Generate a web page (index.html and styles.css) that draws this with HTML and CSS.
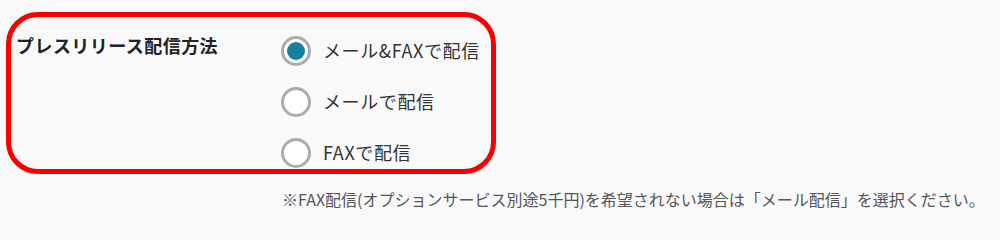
FILE: index.html
```html
<!DOCTYPE html>
<html lang="ja">
<head>
<meta charset="utf-8">
<link rel="stylesheet" href="styles.css">
</head>
<body>
<div class="page">
  <div class="box">
    <div class="label">プレスリリース配信方法</div>
    <div class="options">
      <label class="option"><span class="radio checked"></span><span class="opt-text">メール&amp;FAXで配信</span></label>
      <label class="option"><span class="radio"></span><span class="opt-text">メールで配信</span></label>
      <label class="option"><span class="radio"></span><span class="opt-text">FAXで配信</span></label>
    </div>
  </div>
  <p class="note">※FAX配信(オプションサービス別途5千円)を希望されない場合は「メール配信」を選択ください。</p>
</div>
</body>
</html>
```

FILE: styles.css
```css
html, body {
  margin: 0;
  padding: 0;
  background: #f9f9f9;
}
body {
  font-family: "Noto Sans CJK JP", "Noto Sans", sans-serif;
  color: #333;
}
.page {
  padding: 12px 0 0 6px;
}
.box {
  box-sizing: border-box;
  width: 490px;
  height: 162px;
  border: 5px solid #f80000;
  border-radius: 32px;
  display: flex;
  align-items: flex-start;
}
.label {
  box-sizing: border-box;
  width: 270px;
  padding: 15px 0 0 5px;
  font-size: 18px;
  line-height: 27px;
  font-weight: bold;
  letter-spacing: 0.45px;
  color: #222;
}
.options {
  display: flex;
  flex-direction: column;
  padding-top: 8px;
}
.option {
  display: flex;
  align-items: center;
  height: 51px;
  gap: 12px;
}
.radio {
  box-sizing: border-box;
  width: 30px;
  height: 30px;
  border: 3px solid #acacac;
  border-radius: 50%;
  background: #fff;
  display: flex;
  align-items: center;
  justify-content: center;
}
.radio.checked::after {
  content: "";
  width: 18px;
  height: 18px;
  border-radius: 50%;
  background: #17809d;
}
.opt-text {
  font-size: 18px;
  line-height: 27px;
  letter-spacing: 0.6px;
  color: #333;
}
.note {
  margin: 13px 0 0 276px;
  font-size: 16px;
  line-height: 24px;
  color: #555;
}
```
